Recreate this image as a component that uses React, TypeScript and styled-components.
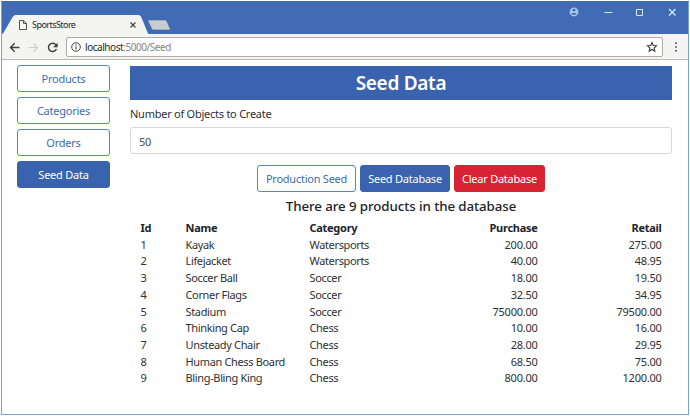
import React from "react";
import styled, { createGlobalStyle, css } from "styled-components";

const blue = "#3963ae";

const GlobalStyle = createGlobalStyle`
  * { box-sizing: border-box; }
  html, body { margin: 0; background: #fff; overflow: hidden; }
  body { font-family: "Noto Sans", "Open Sans", sans-serif; font-size: 11px; color: #2d3035; }
  button, input { font: inherit; }
`;

const BrowserWindow = styled.div`
  width: 688px;
  height: 414px;
  margin: 1px 0 0 1px;
  border: 1px solid #78a3d2;
  border-top-color: #3f69b0;
  background: #fff;
`;

const TitleBar = styled.header`
  height: 32px;
  display: flex;
  align-items: flex-end;
  background: #416bb4;
`;

const Tab = styled.div`
  width: 147px;
  height: 19px;
  padding: 0 13px 0 17px;
  display: flex;
  align-items: center;
  background: #f4f4f2;
  clip-path: polygon(0 100%, 1px 98%, 11px 8%, 13px 0, 137px 0, 139px 8%, 146px 98%, 100% 100%);
`;

const TabTitle = styled.span`
  flex: 1;
  margin-left: 5px;
  font-size: 9px;
  letter-spacing: -0.55px;
  color: #292929;
`;

const NewTab = styled.svg`
  width: 24px;
  height: 12px;
  margin: 0 0 3px -2px;
`;

const WindowControls = styled.div`
  align-self: flex-start;
  display: flex;
  gap: 22px;
  margin: 4px 11px 0 auto;
`;

const Icon = styled.svg`
  display: block;
  flex: none;
  overflow: visible;
  fill: none;
`;

const ProfileIcon = styled(Icon)`
  margin: 1px 2px 0 0;
`;

const Toolbar = styled.div`
  height: 26px;
  padding: 1px 8px 0 7px;
  display: flex;
  align-items: center;
  background: #f4f4f2;
  border-bottom: 1px solid #b9b9b9;
`;

const Navigation = styled.div`
  width: 57px;
  display: flex;
  gap: 8px;
`;

const AddressBar = styled.div`
  width: 597px;
  height: 20px;
  padding: 0 5px 0 4px;
  display: flex;
  align-items: center;
  border: 1px solid #b3a9a9;
  border-radius: 2px;
  background: #fff;
`;

const Url = styled.span`
  flex: 1;
  margin-left: 4px;
  font-size: 10px;
  letter-spacing: -0.45px;
  color: #858585;
  b { font-weight: 400; color: #292929; }
`;

const MenuIcon = styled(Icon)`
  margin-left: auto;
`;

const Page = styled.div`
  display: grid;
  grid-template-columns: 93px 542px;
  column-gap: 20px;
  padding: 5px 0 0 15px;
`;

const Sidebar = styled.nav`
  display: flex;
  flex-direction: column;
  gap: 5px;
`;

const fills = {
  outline: css`background: #fff; border-color: #5584d0; color: #3d6bb5;`,
  primary: css`background: ${blue}; border-color: ${blue}; color: #fff;`,
  danger: css`background: #d82335; border-color: #d82335; color: #fff;`,
};

const Button = styled.button<{ $kind?: keyof typeof fills; $width?: number }>`
  width: ${p => p.$width ?? 93}px;
  height: 27px;
  padding: 1px 0 0;
  border: 1px solid;
  border-radius: 3px;
  font-size: 11px;
  letter-spacing: -0.24px;
  line-height: 16px;
  white-space: nowrap;
  ${p => fills[p.$kind ?? "outline"]}
`;

const Main = styled.main`
  display: flex;
  flex-direction: column;
`;

const PageTitle = styled.h1`
  margin: 1px 0 0;
  height: 34px;
  font-size: 19px;
  font-weight: 600;
  letter-spacing: -0.3px;
  line-height: 35px;
  text-align: center;
  color: #fff;
  background: ${blue};
`;

const Label = styled.label`
  height: 27px;
  line-height: 28px;
  letter-spacing: -0.25px;
`;

const NumberInput = styled.input`
  width: 542px;
  height: 27px;
  padding: 2px 8px 0;
  border: 1px solid #d5d7da;
  border-radius: 3px;
  letter-spacing: -0.2px;
  color: #494f55;
  background: #fff;
`;

const Actions = styled.div`
  display: flex;
  justify-content: flex-start;
  gap: 4px;
  margin: 11px 0 0 127px;
`;

const Summary = styled.h2`
  margin: 2px 0 1px;
  height: 24px;
  font-size: 13.3px;
  font-weight: 500;
  letter-spacing: -0.08px;
  line-height: 24px;
  text-align: center;
  color: #202329;
`;

const Table = styled.table`
  width: 542px;
  border-collapse: collapse;
  table-layout: fixed;
  margin-top: 1px;
`;

const Row = styled.tr`
  height: 16.7px;
`;

const cell = css<{ $right?: boolean }>`
  padding: 0 10.5px;
  line-height: 16.7px;
  white-space: nowrap;
  text-align: ${p => (p.$right ? "right" : "left")};
`;

const HeadCell = styled.th<{ $right?: boolean }>`
  ${cell}
  font-weight: 700;
  letter-spacing: -0.28px;
  color: #202329;
`;

const Cell = styled.td<{ $right?: boolean }>`
  ${cell}
  letter-spacing: ${p => (p.$right ? "-0.25px" : "-0.35px")};
`;

const Col = styled.col<{ $width: number }>`
  width: ${p => p.$width}px;
`;

const products = [
  ["Kayak", "Watersports", "200.00", "275.00"],
  ["Lifejacket", "Watersports", "40.00", "48.95"],
  ["Soccer Ball", "Soccer", "18.00", "19.50"],
  ["Corner Flags", "Soccer", "32.50", "34.95"],
  ["Stadium", "Soccer", "75000.00", "79500.00"],
  ["Thinking Cap", "Chess", "10.00", "16.00"],
  ["Unsteady Chair", "Chess", "28.00", "29.95"],
  ["Human Chess Board", "Chess", "68.50", "75.00"],
  ["Bling-Bling King", "Chess", "800.00", "1200.00"],
];

export default function App() {
  return (
    <>
      <GlobalStyle />
      <BrowserWindow>
        <TitleBar>
          <Tab>
            <Icon width="8" height="10" viewBox="0 0 8 10" stroke="#555" strokeWidth="1">
              <path d="M.5.5h4l3 3v6h-7z M4.5.5v3h3" />
            </Icon>
            <TabTitle>SportsStore</TabTitle>
            <Icon width="6" height="6" viewBox="0 0 6 6" stroke="#444" strokeWidth="1.2">
              <path d="M.5.5l5 5M5.5.5l-5 5" />
            </Icon>
          </Tab>
          <NewTab viewBox="0 0 24 12">
            <path d="M1.5 1h16.5q1.2 0 1.7 1l3.6 8q.3 1-1 1H6.5q-1.2 0-1.7-1L1 2q-.3-1 .5-1z" fill="#cacccf" stroke="#3965a9" strokeWidth=".6" />
          </NewTab>
          <WindowControls>
            <ProfileIcon width="10" height="10" viewBox="0 0 10 10">
              <circle cx="5" cy="5" r="4.4" fill="#a9c8ed" />
              <circle cx="5" cy="3.2" r="1.4" fill="#416bb4" />
              <path d="M2.2 6.1h5.6q-.8 2-2.8 2t-2.8-2z" fill="#416bb4" />
            </ProfileIcon>
            <Icon width="10" height="10" viewBox="0 0 10 10" stroke="#d6eafa">
              <path d="M1.5 6.5h8" />
            </Icon>
            <Icon width="10" height="10" viewBox="0 0 10 10" stroke="#d6eafa">
              <path d="M1.5 3.5h6v6h-6z" />
            </Icon>
            <Icon width="10" height="10" viewBox="0 0 10 10" stroke="#e2f1fc" strokeWidth="1.1">
              <path d="M2 3l6.5 6.5M8.5 3L2 9.5" />
            </Icon>
          </WindowControls>
        </TitleBar>
        <Toolbar>
          <Navigation>
            <Icon width="11" height="11" viewBox="0 0 11 11" stroke="#414141" strokeWidth="1.4">
              <path d="M10.5 5.5H2M5.7 1.3L1.5 5.5l4.2 4.2" />
            </Icon>
            <Icon width="11" height="11" viewBox="0 0 11 11" stroke="#cdcdcd" strokeWidth="1.2">
              <path d="M.5 5.5h9M5.5 1.5l4 4-4 4" />
            </Icon>
            <Icon width="11" height="11" viewBox="0 0 11 11">
              <path d="M9.4 7A4.1 4.1 0 1 1 8.9 2.9" stroke="#414141" strokeWidth="1.5" />
              <path d="M10.6.7v4.5H6.1z" fill="#414141" />
            </Icon>
          </Navigation>
          <AddressBar>
            <Icon width="10" height="10" viewBox="0 0 10 10" stroke="#444">
              <circle cx="5" cy="5" r="4.3" />
              <path d="M5 4.3v3.2M5 2.2v1.2" strokeWidth="1.1" />
            </Icon>
            <Url><b>localhost</b>:5000/Seed</Url>
            <Icon width="10" height="10" viewBox="0 0 10 10" stroke="#383838" strokeWidth="1.1">
              <path d="M5 .6l1.3 2.9 3.2.3L7.1 6l.7 3.2L5 7.5 2.2 9.2 2.9 6 .5 3.8l3.2-.3z" />
            </Icon>
          </AddressBar>
          <MenuIcon width="8" height="10" viewBox="0 0 8 10">
            <path d="M3.2.4h1.6V2H3.2zM3.2 4.2h1.6v1.6H3.2zM3.2 8h1.6v1.6H3.2z" fill="#393939" />
          </MenuIcon>
        </Toolbar>
        <Page>
          <Sidebar>
            <Button>Products</Button>
            <Button>Categories</Button>
            <Button>Orders</Button>
            <Button $kind="primary">Seed Data</Button>
          </Sidebar>
          <Main>
            <PageTitle>Seed Data</PageTitle>
            <Label htmlFor="count">Number of Objects to Create</Label>
            <NumberInput id="count" defaultValue="50" />
            <Actions>
              <Button $width={99}>Production Seed</Button>
              <Button $kind="primary" $width={90}>Seed Database</Button>
              <Button $kind="danger" $width={91}>Clear Database</Button>
            </Actions>
            <Summary>There are 9 products in the database</Summary>
            <Table>
              <colgroup>
                <Col $width={45} />
                <Col $width={124} />
                <Col $width={124} />
                <Col $width={125} />
                <Col $width={124} />
              </colgroup>
              <thead>
                <Row>
                  <HeadCell>Id</HeadCell>
                  <HeadCell>Name</HeadCell>
                  <HeadCell>Category</HeadCell>
                  <HeadCell $right>Purchase</HeadCell>
                  <HeadCell $right>Retail</HeadCell>
                </Row>
              </thead>
              <tbody>
                {products.map(([name, category, purchase, retail], i) => (
                  <Row key={name}>
                    <Cell>{i + 1}</Cell>
                    <Cell>{name}</Cell>
                    <Cell>{category}</Cell>
                    <Cell $right>{purchase}</Cell>
                    <Cell $right>{retail}</Cell>
                  </Row>
                ))}
              </tbody>
            </Table>
          </Main>
        </Page>
      </BrowserWindow>
    </>
  );
}
